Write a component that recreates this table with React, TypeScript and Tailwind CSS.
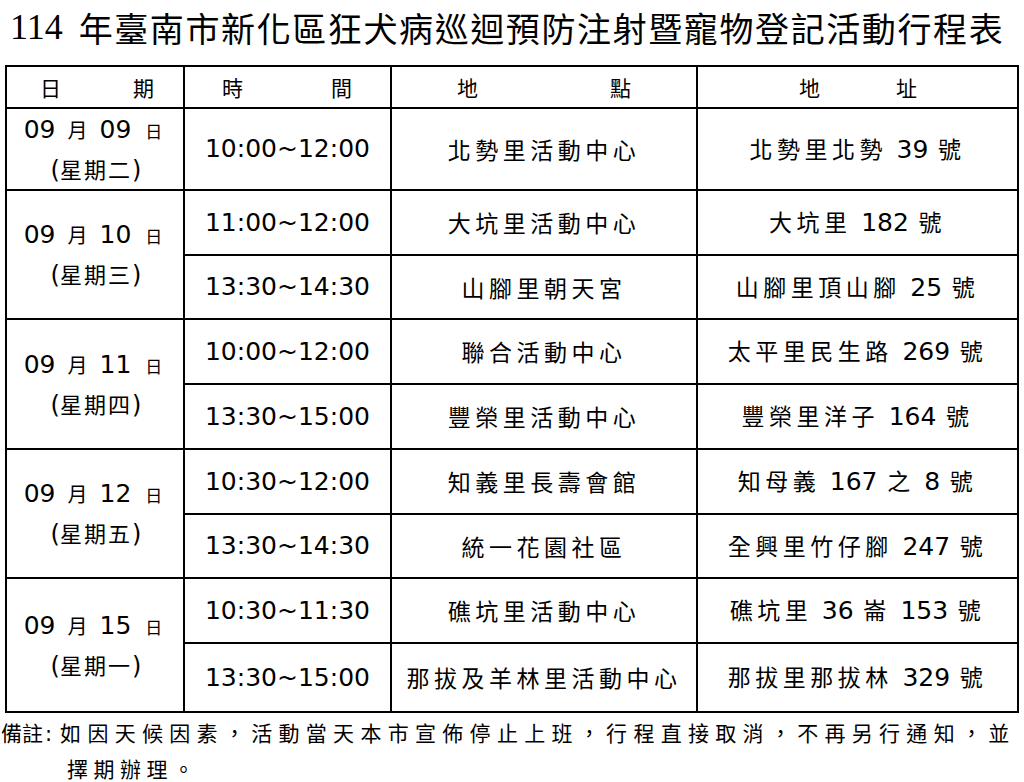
import React from "react";

type Slot = { time: string; place: string; addr: string; h: string };
type Day = { d: string; week: string; slots: Slot[] };

const days: Day[] = [
  {
    d: "09",
    week: "二",
    slots: [{ time: "10:00~12:00", place: "北勢里活動中心", addr: "北勢里北勢 39 號", h: "h-[82px]" }],
  },
  {
    d: "10",
    week: "三",
    slots: [
      { time: "11:00~12:00", place: "大坑里活動中心", addr: "大坑里 182 號", h: "h-[65px]" },
      { time: "13:30~14:30", place: "山腳里朝天宮", addr: "山腳里頂山腳 25 號", h: "h-[64px]" },
    ],
  },
  {
    d: "11",
    week: "四",
    slots: [
      { time: "10:00~12:00", place: "聯合活動中心", addr: "太平里民生路 269 號", h: "h-[65px]" },
      { time: "13:30~15:00", place: "豐榮里活動中心", addr: "豐榮里洋子 164 號", h: "h-[65px]" },
    ],
  },
  {
    d: "12",
    week: "五",
    slots: [
      { time: "10:30~12:00", place: "知義里長壽會館", addr: "知母義 167 之 8 號", h: "h-[65px]" },
      { time: "13:30~14:30", place: "統一花園社區", addr: "全興里竹仔腳 247 號", h: "h-[64px]" },
    ],
  },
  {
    d: "15",
    week: "一",
    slots: [
      { time: "10:30~11:30", place: "礁坑里活動中心", addr: "礁坑里 36 崙 153 號", h: "h-[65px]" },
      { time: "13:30~15:00", place: "那拔及羊林里活動中心", addr: "那拔里那拔林 329 號", h: "h-[69px]" },
    ],
  },
];

// digits in DejaVu, chinese in Noto with spacing
function Mixed({ text }: { text: string }) {
  const parts = text.split(/(\d+)/);
  return (
    <span className="leading-none">
      {parts.map((p, i) =>
        /^\d+$/.test(p) ? (
          <span key={i} className="font-['DejaVu_Sans',sans-serif] text-[25px] tracking-normal">
            {p}
          </span>
        ) : (
          <span key={i} className="font-['Noto_Sans_CJK_TC',sans-serif] text-[23px] tracking-[4.5px]">
            {p}
          </span>
        ),
      )}
    </span>
  );
}

function Head({ a, b, pad }: { a: string; b: string; pad: string }) {
  return (
    <th className="border-2 border-black p-0 font-normal">
      <div className={`flex justify-between ${pad} font-['Noto_Sans_CJK_TC',sans-serif] text-[21px] leading-[30px]`}>
        <span>{a}</span>
        <span>{b}</span>
      </div>
    </th>
  );
}

export default function App() {
  return (
    <div className="w-[1024px] h-[782px] overflow-hidden bg-white text-black">
      <div className="h-[54px] flex items-center pl-[10px]">
        <span className="font-['Liberation_Serif',serif] text-[36px] mr-[16px]">114</span>
        <span className="font-['Noto_Sans_CJK_TC',sans-serif] text-[34px] tracking-[1.6px]">
          年臺南市新化區狂犬病巡迴預防注射暨寵物登記活動行程表
        </span>
      </div>

      <table className="mt-[11px] ml-[5px] w-[1012px] table-fixed border-collapse">
        <colgroup>
          <col className="w-[178px]" />
          <col className="w-[207px]" />
          <col className="w-[306px]" />
          <col className="w-[321px]" />
        </colgroup>
        <thead>
          <tr className="h-[42px]">
            <Head a="日" b="期" pad="pl-[33px] pr-[29px]" />
            <Head a="時" b="間" pad="pl-[37px] pr-[38px]" />
            <Head a="地" b="點" pad="pl-[65px] pr-[65px]" />
            <Head a="地" b="址" pad="pl-[101px] pr-[100px]" />
          </tr>
        </thead>
        <tbody>
          {days.map((day) =>
            day.slots.map((s, i) => (
              <tr key={day.d + i} className={s.h}>
                {i === 0 && (
                  <td rowSpan={day.slots.length} className="border-2 border-black p-0 text-center align-middle">
                    <div className="h-[40px] flex items-center justify-center pr-[4px]">
                      <span className="leading-none">
                        <span className="font-['DejaVu_Sans',sans-serif] text-[25px]">09</span>
                        <span className="font-['Noto_Sans_CJK_TC',sans-serif] text-[20px] mx-[12px]">月</span>
                        <span className="font-['DejaVu_Sans',sans-serif] text-[25px]">{day.d}</span>
                        <span className="font-['Noto_Sans_CJK_TC',sans-serif] text-[17px] ml-[14px]">日</span>
                      </span>
                    </div>
                    <div className="h-[40px] flex items-center justify-center pl-[2px]">
                      <span className="leading-none">
                        <span className="font-['DejaVu_Sans',sans-serif] text-[24px]">(</span>
                        <span className="font-['Noto_Sans_CJK_TC',sans-serif] text-[22px] tracking-[2px]">
                          星期{day.week}
                        </span>
                        <span className="font-['DejaVu_Sans',sans-serif] text-[24px]">)</span>
                      </span>
                    </div>
                  </td>
                )}
                <td className="border-2 border-black p-0 text-center align-middle font-['DejaVu_Sans',sans-serif] text-[25px] leading-[32px]">
                  {s.time}
                </td>
                <td className="border-2 border-black p-0 text-center align-middle leading-none">
                  <Mixed text={s.place} />
                </td>
                <td className="border-2 border-black p-0 text-center align-middle leading-none">
                  <Mixed text={s.addr} />
                </td>
              </tr>
            )),
          )}
        </tbody>
      </table>

      <div className="mt-[2px] font-['Noto_Sans_CJK_TC',sans-serif] text-[21px] whitespace-nowrap">
        <div className="pl-[1px] leading-[34px]">
          <span>備註</span>
          <span className="font-['DejaVu_Sans',sans-serif] ml-[2px] mr-[8px]">:</span>
          <span className="tracking-[6.3px]">
            如因天候因素，活動當天本市宣佈停止上班，行程直接取消，不再另行通知，並
          </span>
        </div>
        <div className="pl-[67px] tracking-[5.5px] leading-[26px] mt-[4px]">擇期辦理。</div>
      </div>
    </div>
  );
}
